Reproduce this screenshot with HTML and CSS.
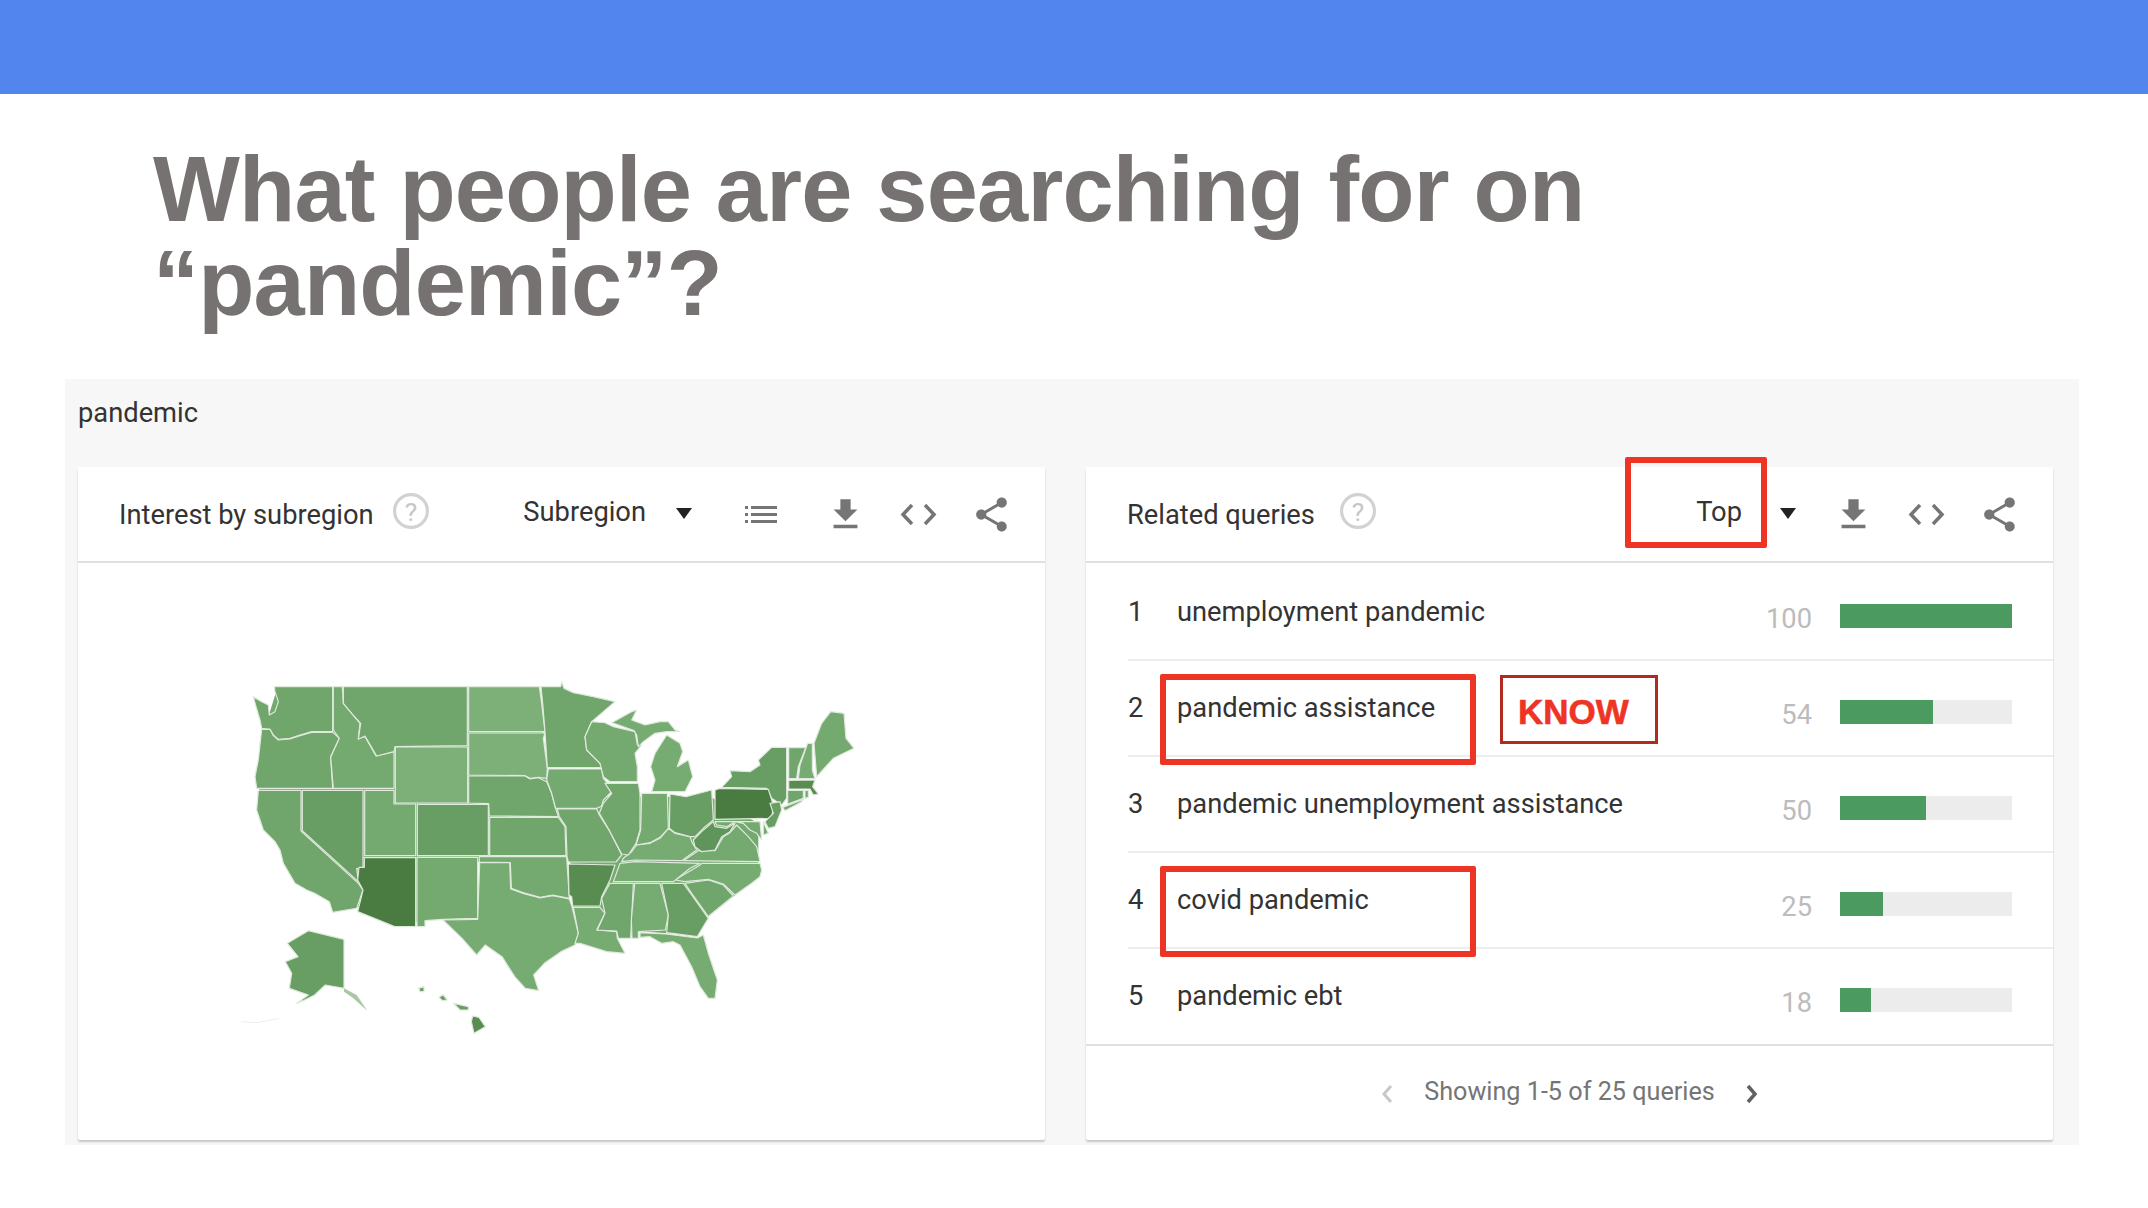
FILE: index.html
```html
<!DOCTYPE html>
<html lang="en">
<head>
<meta charset="utf-8">
<title>What people are searching for</title>
<link rel="stylesheet" href="styles.css">
</head>
<body>
<div class="band"></div>
<h1 class="title">What people are searching for on<br>“pandemic”?</h1>
<section class="panel">
  <div class="term">pandemic</div>
  <div class="cards">
    <article class="card">
      <header class="head">
        <span class="head-title">Interest by subregion</span>
        <svg class="help" viewBox="0 0 34 34"><circle class="help-ring" cx="17" cy="17" r="15.5"/><text class="help-q" x="17" y="26">?</text></svg>
        <div class="controls">
          <span class="select-label">Subregion</span>
          <span class="tri tri-sub"></span>
          <svg class="ico ico-list" viewBox="0 0 41 41"><path class="fill-g" d="M5 12h3v3H5zM5 19h3v3H5zM5 26h3v3H5zM11 12h26v3H11zM11 19h26v3H11zM11 26h26v3H11z"/></svg>
          <svg class="ico ico-dl" viewBox="0 0 24 24"><path class="fill-g" d="M19 9h-4V3H9v6H5l7 7 7-7zM5 18v2h14v-2H5z"/></svg>
          <svg class="ico ico-code" viewBox="0 0 41 41"><path class="line-g" d="M14 11l-9 9.500 9 9.500M27 11l9 9.500-9 9.500"/></svg>
          <svg class="ico ico-share" viewBox="0 0 24 24"><path class="fill-g" d="M18 16.080c-.76 0-1.440.3-1.960.77L8.910 12.700c.05-.23.09-.46.09-.7s-.04-.47-.09-.7l7.050-4.110c.54.5 1.250.81 2.040.81 1.660 0 3-1.340 3-3s-1.340-3-3-3-3 1.340-3 3c0 .24.04.47.09.7L8.040 9.810C7.500 9.310 6.790 9 6 9c-1.660 0-3 1.340-3 3s1.340 3 3 3c.79 0 1.500-.31 2.040-.81l7.120 4.160c-.05.21-.08.43-.08.65 0 1.610 1.310 2.920 2.920 2.920 1.610 0 2.920-1.310 2.920-2.920s-1.310-2.920-2.920-2.920z"/></svg>
        </div>
      </header>
      <div class="map-wrap">
        <svg class="map" viewBox="0 0 1980 1170">
          <polygon class="land" points="1150,410 1470,410 1615,490 1615,650 1465,770 1430,825 1190,810 1060,740 1040,450"/>
          <polygon class="land" points="170,90 960,90 975,330 1040,450 1040,720 780,600 600,790 420,750 240,520 120,450 115,300 130,220"/>
          <polygon class="c3" points="163,80 338,80 338,215 275,215 240,225 210,235 175,238 160,225 150,208 125,205 120,180 108,140 100,110 125,125 145,135 148,165 165,155 175,125 165,95"/>
          <polygon class="c3" points="125,208 150,208 160,227 175,240 210,237 240,227 275,217 338,217 358,235 332,290 338,385 110,385 105,350 115,300"/>
          <polygon class="c2" points="340,80 367,80 370,130 395,160 420,190 415,235 435,230 468,288 522,275 522,385 340,385 332,292 358,235 340,210"/>
          <polygon class="c3" points="370,80 742,80 742,257 525,260 522,275 470,288 435,228 415,238 422,190 395,160 370,130"/>
          <polygon class="c1" points="526,261 743,261 743,429 526,429"/>
          <polygon class="c1" points="746,80 958,80 965,130 975,215 746,215"/>
          <polygon class="c1" points="746,219 975,219 970,235 982,325 980,355 955,352 930,355 915,347 746,345"/>
          <polygon class="c3" points="746,348 915,348 930,357 955,353 980,365 995,400 1005,440 1015,470 808,468 806,431 746,429"/>
          <polygon class="c3" points="809,472 1015,472 1035,500 1038,587 809,587"/>
          <polygon class="c4" points="592,433 805,433 805,587 592,587"/>
          <polygon class="c2" points="434,391 522,391 522,432 587,432 587,587 434,587"/>
          <polygon class="c4" points="247,391 429,391 429,630 410,625 415,665 247,512"/>
          <polygon class="c3" points="115,391 243,391 243,513 415,670 429,690 410,745 338,757 328,725 284,700 260,690 225,670 190,610 180,570 165,545 130,510 110,450"/>
          <polygon class="c6" points="433,593 587,593 587,800 524,800 413,755 423,715 429,690 413,660 417,622 433,622"/>
          <polygon class="c2" points="591,592 773,592 773,775 669,778 615,782 615,800 591,800"/>
          <polygon class="c2" points="778,590 1040,590 1048,715 998,705 960,712 909,698 874,685 871,608 778,606"/>
          <polygon class="c1b" points="779,608 869,608 872,687 909,700 960,714 998,707 1048,717 1056,740 1075,820 1065,855 1023,875 973,910 941,945 956,992 916,985 884,950 846,890 796,855 770,885 726,835 669,780 773,778"/>
          <polygon class="c3" points="963,80 1022,80 1025,65 1032,85 1060,98 1120,110 1185,125 1115,185 1095,230 1100,270 1140,310 1145,322 982,323 975,215 968,130"/>
          <polygon class="c2" points="985,327 1145,327 1150,355 1180,390 1150,420 1145,438 1130,445 1007,445 995,400 980,360"/>
          <polygon class="c3" points="1012,447 1130,447 1138,465 1170,515 1190,555 1205,585 1188,606 1045,606 1041,590 1038,500 1018,470"/>
          <polygon class="c5" points="1045,612 1185,615 1170,660 1145,710 1140,738 1058,738 1055,710 1047,705"/>
          <polygon class="c1b" points="1060,742 1140,742 1155,760 1130,810 1190,815 1192,835 1215,880 1160,875 1080,850 1065,850 1075,820"/>
          <polygon class="c3" points="1170,670 1240,670 1232,835 1195,835 1190,813 1132,810 1155,760 1145,715"/>
          <polygon class="c1b" points="1244,670 1320,670 1345,765 1336,810 1255,815 1255,835 1236,835 1234,780"/>
          <polygon class="c4" points="1325,670 1390,670 1415,705 1465,775 1450,800 1432,830 1340,818 1345,765"/>
          <polygon class="c1b" points="1260,818 1338,822 1432,834 1450,825 1465,880 1492,960 1485,1015 1465,1015 1440,980 1415,920 1380,855 1360,845 1325,850 1290,830 1260,832"/>
          <polygon class="c3" points="1395,670 1465,660 1510,675 1540,708 1470,765 1465,770 1415,700"/>
          <polygon class="c1b" points="1365,660 1440,615 1445,610 1620,610 1625,630 1620,650 1595,670 1545,705 1510,672 1465,658 1395,665"/>
          <polygon class="c1b" points="1180,665 1200,610 1245,605 1440,610 1410,625 1360,665"/>
          <polygon class="c1b" points="1210,595 1235,575 1250,555 1290,550 1320,535 1345,505 1365,520 1410,530 1415,545 1430,570 1385,602 1245,600 1205,605"/>
          <polygon class="c2" points="1265,400 1342,400 1345,505 1320,532 1290,548 1248,555 1262,510"/>
          <polygon class="c3" points="1155,370 1255,370 1260,400 1260,510 1248,550 1225,585 1205,582 1170,515 1138,460 1150,430 1175,400"/>
          <polygon class="c4" points="1350,402 1398,410 1475,390 1480,480 1450,505 1425,530 1410,530 1365,518 1348,505"/>
          <polygon class="c2" points="1390,602 1435,572 1485,572 1510,530 1530,518 1550,495 1585,530 1610,560 1620,605"/>
          <polygon class="c5b" points="1420,540 1445,515 1480,485 1485,500 1520,505 1545,490 1530,515 1505,530 1485,570 1445,575 1425,560"/>
          <polygon class="c2" points="1485,485 1620,485 1625,540 1610,520 1590,510 1570,490 1545,485 1520,500 1490,495"/>
          <polygon class="c2" points="1630,485 1645,520 1630,525"/>
          <polygon class="c4" points="1505,382 1535,350 1530,332 1590,335 1620,315 1615,300 1655,262 1700,262 1700,415 1685,435 1655,415 1640,385"/>
          <polygon class="c6" points="1485,390 1500,385 1645,388 1660,435 1655,475 1485,478"/>
          <polygon class="c4" points="1650,430 1680,425 1685,450 1665,500 1645,505 1635,485 1660,460"/>
          <polygon class="c3" points="1706,263 1757,263 1735,320 1730,356 1706,356"/>
          <polygon class="c1b" points="1763,250 1777,250 1777,330 1785,356 1735,356 1740,315"/>
          <polygon class="c2" points="1782,250 1805,190 1832,155 1872,160 1878,235 1902,265 1840,295 1790,350"/>
          <polygon class="c5" points="1706,361 1785,360 1778,380 1795,402 1780,405 1770,387 1706,387"/>
          <polygon class="c3" points="1703,391 1750,391 1750,415 1703,432"/>
          <polygon class="c3" points="1755,391 1765,391 1765,412 1755,415"/>
          <polygon class="c3" points="1688,442 1750,418 1745,425 1695,452"/>
          <polygon class="c2" points="1115,185 1155,188 1180,200 1245,215 1252,255 1265,255 1245,280 1252,320 1252,365 1170,365 1150,350 1140,310 1100,270 1095,230"/>
          <polygon class="c1b" points="1175,188 1235,155 1250,150 1235,180 1275,195 1320,185 1345,185 1365,210 1380,215 1340,215 1305,220 1270,245 1255,260 1250,225 1242,212"/>
          <polygon class="c1b" points="1295,395 1305,360 1292,320 1305,280 1340,225 1380,250 1388,275 1372,320 1405,300 1418,350 1395,395"/>
          <polygon class="c4" points="265,812 372,838 372,985 316,975 284,1005 250,1022 230,1030 265,1005 208,985 215,940 196,905 234,890 202,850"/>
          <polygon class="tail" points="250,1025 177,1075 240,1032"/>
          <polygon class="tail" points="372,985 410,1005 442,1052 400,1015 372,995"/>
          <polyline class="isles" points="63,1085 110,1088 177,1075"/>
          <polygon class="c5" points="754,1085 758,1068 777,1072 796,1100 762,1120"/>
          <polygon class="c4" points="657,1012 669,1004 682,1020 667,1022"/>
          <polygon class="c4" points="701,1030 745,1040 745,1050 720,1050"/>
          <polygon class="c4" points="596,985 612,980 612,995 600,995"/>
        </svg>
      </div>
    </article>
    <article class="card">
      <header class="head">
        <span class="head-title">Related queries</span>
        <svg class="help help-r" viewBox="0 0 34 34"><circle class="help-ring" cx="17" cy="17" r="15.5"/><text class="help-q" x="17" y="26">?</text></svg>
        <div class="controls">
          <span class="select-label">Top</span>
          <span class="tri tri-top"></span>
          <svg class="ico ico-dl-r" viewBox="0 0 24 24"><path class="fill-g" d="M19 9h-4V3H9v6H5l7 7 7-7zM5 18v2h14v-2H5z"/></svg>
          <svg class="ico ico-code" viewBox="0 0 41 41"><path class="line-g" d="M14 11l-9 9.500 9 9.500M27 11l9 9.500-9 9.500"/></svg>
          <svg class="ico ico-share" viewBox="0 0 24 24"><path class="fill-g" d="M18 16.080c-.76 0-1.440.3-1.960.77L8.910 12.700c.05-.23.09-.46.09-.7s-.04-.47-.09-.7l7.050-4.110c.54.5 1.250.81 2.040.81 1.660 0 3-1.340 3-3s-1.340-3-3-3-3 1.340-3 3c0 .24.04.47.09.7L8.040 9.810C7.500 9.310 6.790 9 6 9c-1.660 0-3 1.340-3 3s1.340 3 3 3c.79 0 1.500-.31 2.040-.81l7.120 4.160c-.05.21-.08.43-.08.65 0 1.610 1.310 2.920 2.920 2.920 1.610 0 2.920-1.310 2.920-2.920s-1.310-2.920-2.920-2.920z"/></svg>
        </div>
        <div class="mark mark-top"></div>
      </header>
      <ol class="rows">
        <li class="row"><span class="rank">1</span><span class="query">unemployment pandemic</span><span class="val">100</span><span class="track"><span class="fill" style="width:100%"></span></span></li>
        <li class="row"><span class="rank">2</span><span class="query">pandemic assistance</span><span class="val">54</span><span class="track"><span class="fill" style="width:54%"></span></span><div class="mark mark-row"></div><div class="know">KNOW</div></li>
        <li class="row"><span class="rank">3</span><span class="query">pandemic unemployment assistance</span><span class="val">50</span><span class="track"><span class="fill" style="width:50%"></span></span></li>
        <li class="row"><span class="rank">4</span><span class="query">covid pandemic</span><span class="val">25</span><span class="track"><span class="fill" style="width:25%"></span></span><div class="mark mark-row"></div></li>
        <li class="row"><span class="rank">5</span><span class="query">pandemic ebt</span><span class="val">18</span><span class="track"><span class="fill" style="width:18%"></span></span></li>
      </ol>
      <footer class="foot">
        <svg class="chev" viewBox="0 0 12 22"><path class="chev-off" d="M10 3l-7 8 7 8"/></svg>
        <span class="foot-text">Showing 1-5 of 25 queries</span>
        <svg class="chev" viewBox="0 0 12 22"><path class="chev-on" d="M2 3l7 8-7 8"/></svg>
      </footer>
    </article>
  </div>
</section>
</body>
</html>
```
FILE: styles.css
```css
* { box-sizing: border-box; }
html, body { margin: 0; padding: 0; background: #fff; }
body { width: 2148px; height: 1208px; overflow: hidden; font-family: Roboto, "Liberation Sans", sans-serif; color: #333; }

.band { height: 94px; background: #5285ee; }

.title {
  margin: 48px 0 49px 153px;
  font: 700 92px/94px "Liberation Sans", Arial, sans-serif;
  letter-spacing: -0.8px;
  color: #767271;
}

.panel { margin-left: 65px; width: 2014px; height: 766px; padding: 0 26px 0 13px; background: #f7f7f7; }
.term { height: 88px; padding-top: 17px; font-size: 27.3px; line-height: 34px; color: #333; }
.cards { display: flex; gap: 41px; }
.card { position: relative; width: 967px; height: 673px; background: #fff; border-radius: 2px; box-shadow: 0 2px 2px rgba(0,0,0,.2); }

.head { position: relative; display: flex; align-items: center; height: 96px; padding: 0 33px 0 41px; border-bottom: 2px solid #e0e0e0; }
.head-title { font-size: 27.3px; line-height: 34px; color: #333; margin-top: 1px; }
.help { width: 36px; height: 36px; margin: 0 0 6px 19px; flex: none; }
.help-r { margin-left: 25px; }
.help-ring { fill: none; stroke: #d2d2d2; stroke-width: 3; }
.help-q { font: 400 25px "Roboto", sans-serif; fill: #c6c6c6; text-anchor: middle; }

.controls { display: flex; align-items: center; margin-left: auto; }
.select-label { font-size: 27.3px; line-height: 34px; color: #333; margin-bottom: 4px; }
.tri { width: 0; height: 0; border-left: 8px solid transparent; border-right: 8px solid transparent; border-top: 11px solid #222; margin-bottom: 2px; }
.tri-sub { margin-left: 30px; }
.tri-top { margin-left: 38px; }
.ico { width: 41px; height: 41px; flex: none; margin-left: 32px; }
.ico-list { margin-left: 48px; }
.ico-dl { margin-left: 44px; }
.ico-dl-r { margin-left: 37px; }
.fill-g { fill: #757575; }
.line-g { fill: none; stroke: #757575; stroke-width: 3.500; }

.map-wrap { padding: 97px 0 0 142px; }
.map { display: block; width: 660px; height: 390px; filter: blur(0.5px); }
.map polygon { stroke: #dfe9dc; stroke-width: 1.200px; vector-effect: non-scaling-stroke; stroke-linejoin: round; }
.map .land { fill: #74a970; stroke: none; }
.map .tail { fill: #a9c9a5; stroke: none; }
.isles { fill: none; stroke: #e8f0e6; stroke-width: 1px; vector-effect: non-scaling-stroke; }
.c1 { fill: #7db078; }
.c1b { fill: #76ab72; }
.c2 { fill: #74a970; }
.c3 { fill: #70a56c; }
.c4 { fill: #689d63; }
.c5b { fill: #5f945a; }
.c5 { fill: #598c51; }
.c6 { fill: #4a7b40; }

.rows { list-style: none; margin: 2px 0 0; padding: 0; border-bottom: 2px solid #e0e0e0; }
.row { position: relative; display: flex; align-items: flex-start; height: 96px; margin-left: 42px; padding-top: 30px; border-bottom: 2px solid #ededed; font-size: 27.3px; line-height: 34px; }
.row:last-child { border-bottom: 0; height: 95px; }
.rank { width: 49px; color: #333; }
.query { color: #333; }
.val { margin-left: auto; margin-top: 7px; color: #bcbcbc; }
.track { display: block; width: 172px; height: 24px; margin: 9px 41px 0 28px; background: #ececec; }
.fill { display: block; height: 100%; background: #4b9b60; }

.mark { position: absolute; border: 6px solid #ee3424; border-radius: 2px; }
.mark-top { left: 539px; top: -10px; width: 142px; height: 91px; }
.mark-row { left: 32px; top: 13px; width: 316px; height: 91px; }
.know { position: absolute; left: 372px; top: 14px; width: 158px; height: 69px; padding: 2px 0 0 15px; border: 3px solid #b02a20; font: 700 35px/63px "Liberation Sans", Arial, sans-serif; -webkit-text-stroke: 0.6px #ee3424; color: #ee3424; }

.foot { display: flex; align-items: center; justify-content: center; height: 92px; gap: 31px; }
.foot-text { font-size: 25.2px; line-height: 34px; color: #757575; }
.chev { width: 12px; height: 22px; margin-top: 3px; }
.chev-off { fill: none; stroke: #c8c8c8; stroke-width: 3; }
.chev-on { fill: none; stroke: #616161; stroke-width: 3.500; }
```
